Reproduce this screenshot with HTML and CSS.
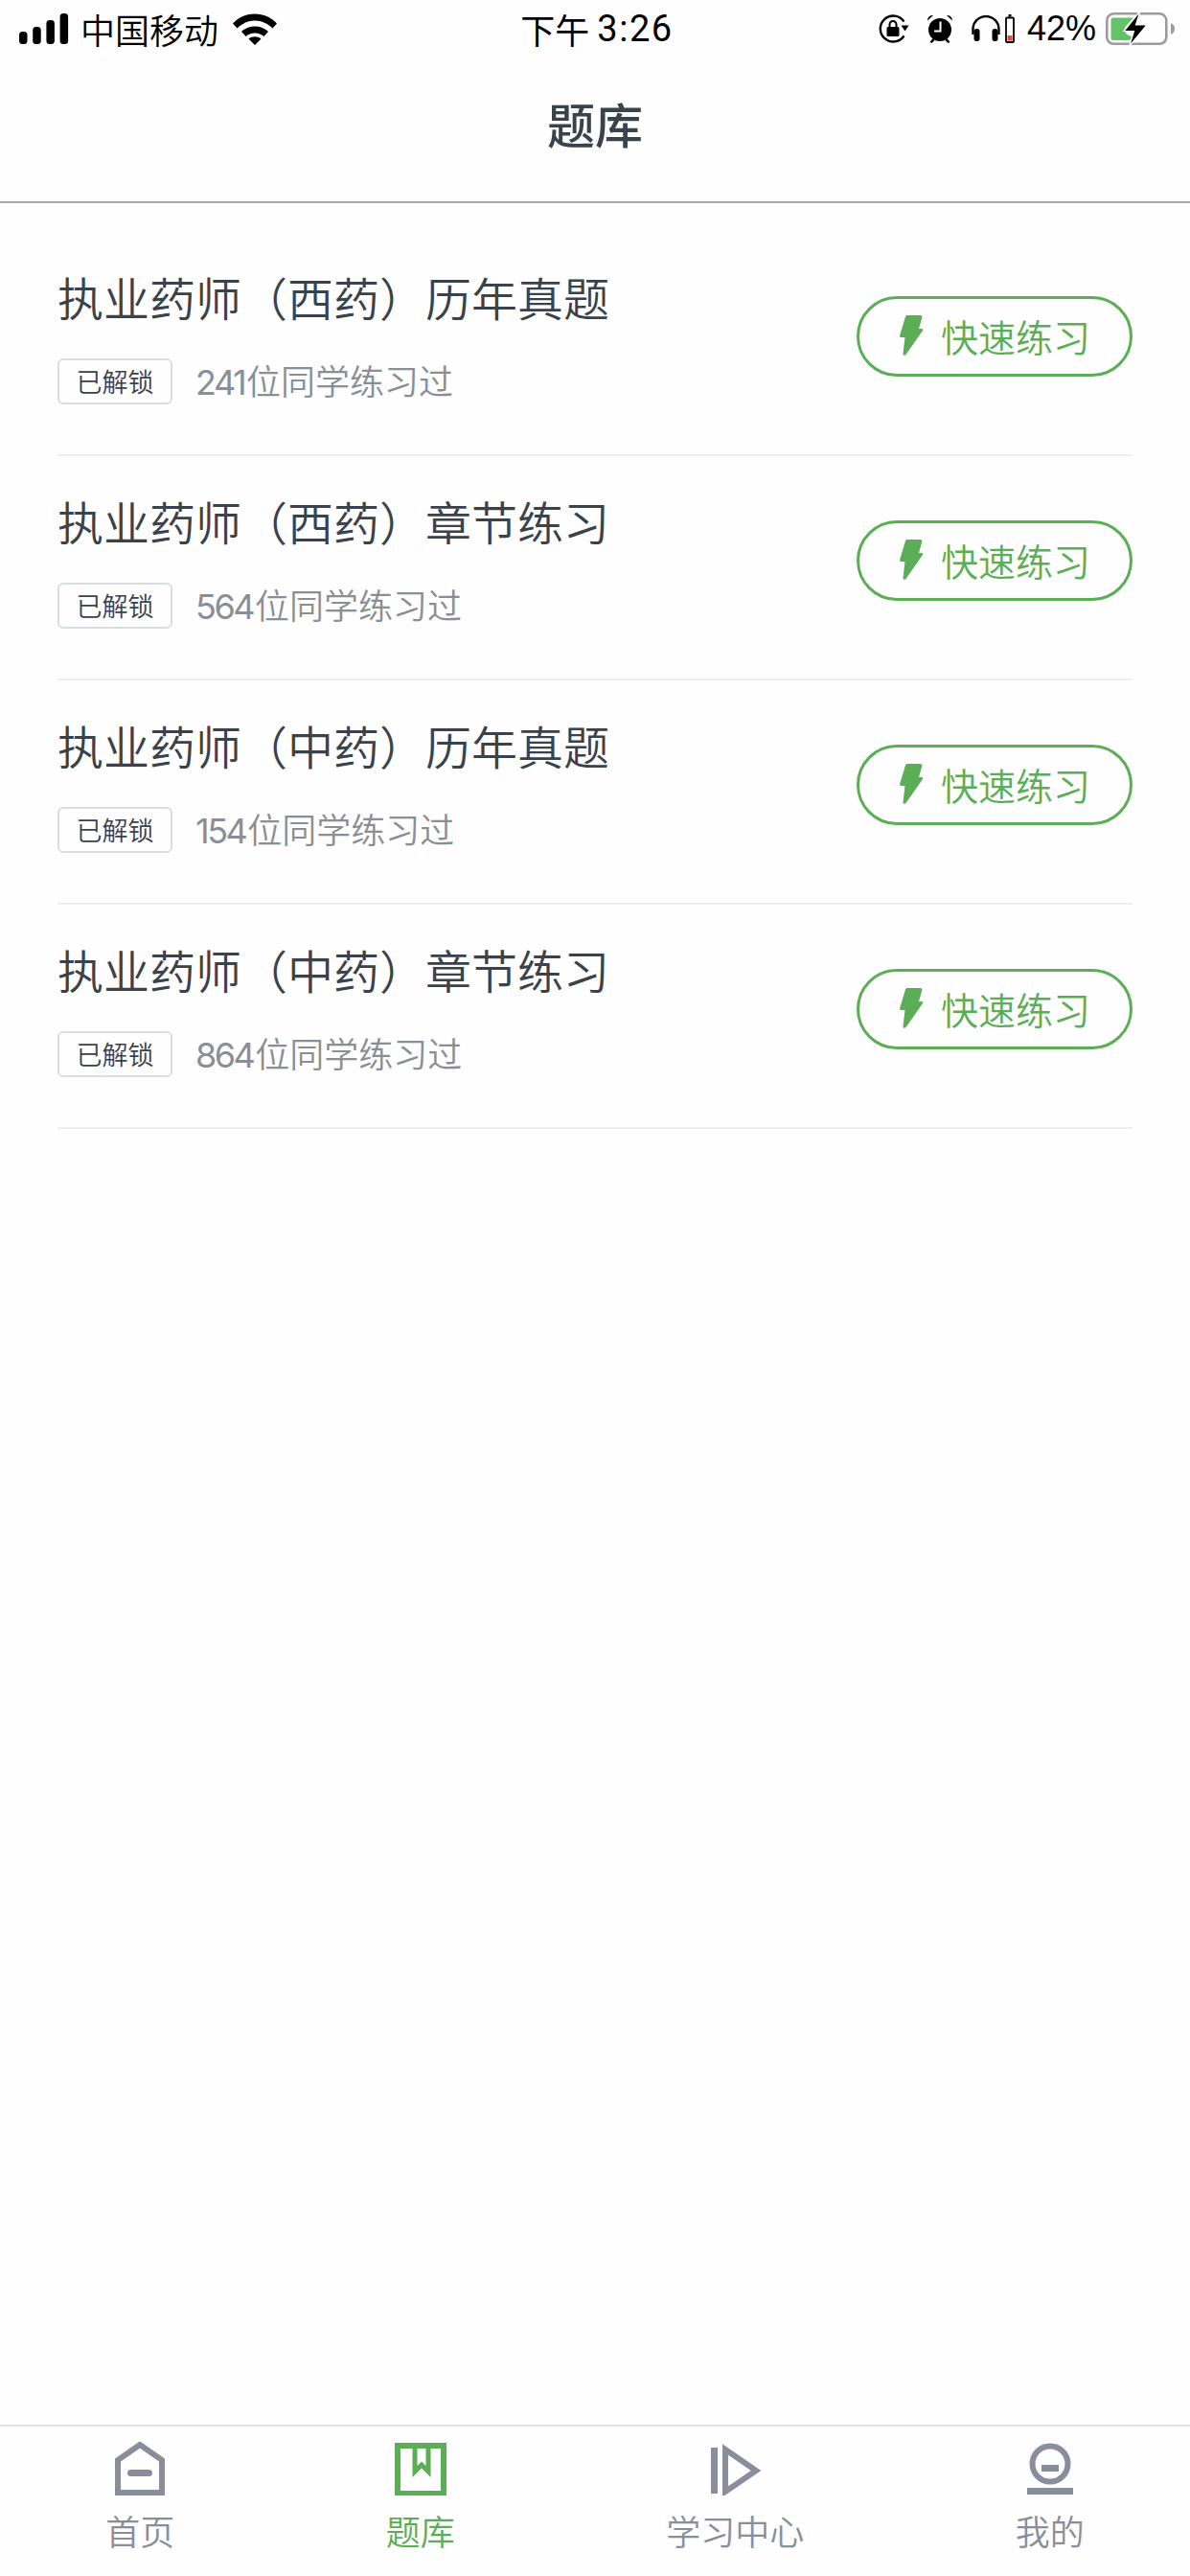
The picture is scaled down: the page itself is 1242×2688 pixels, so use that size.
FILE: index.html
```html
<!DOCTYPE html>
<html lang="zh-CN">
<head>
<meta charset="utf-8">
<title>题库</title>
<link rel="stylesheet" href="styles.css">
</head>
<body>
<div class="app">
  <header class="status">
    <div class="status-left">
      <svg class="sig" width="52" height="32" viewBox="0 0 52 32"><rect x="0" y="19" width="8.500" height="13" rx="3.500"/><rect x="14.200" y="14" width="8.500" height="18" rx="3.500"/><rect x="28.400" y="7" width="8.500" height="25" rx="3.500"/><rect x="42.600" y="0" width="8.500" height="32" rx="3.500"/></svg>
      <span class="carrier">中国移动</span>
      <svg class="wifi" width="46" height="33" viewBox="0 0 46 33"><path d="M0 10.500C6 4 14 .5 23 .5S40 4 46 10.500l-4.500 5C36.500 10.500 30 7.500 23 7.500S9.500 10.500 4.500 15.500zM9 19C12.500 15.500 17.500 13.500 23 13.500S33.500 15.500 37 19l-4.700 5C30 21.800 26.700 20.500 23 20.500S16 21.800 13.700 24zM16.500 26.500C18.300 25 20.500 24.300 23 24.300S27.700 25 29.500 26.500L23 33z"/></svg>
    </div>
    <div class="clock"><span class="clock-cn">下午</span><span class="clock-num">3:26</span></div>
    <div class="status-right">
      <svg class="ic-rot" width="32" height="30" viewBox="0 0 32 30"><path d="M26.500 7.500A13.500 13.500 0 1 0 26.500 22.500" fill="none" stroke="#000" stroke-width="2.400"/><path d="M23.500 11.500h8l-4 6z"/><rect x="8.500" y="13" width="13" height="10" rx="1.500"/><path d="M11.500 13v-2.500a3.500 3.500 0 0 1 7 0V13" fill="none" stroke="#000" stroke-width="2"/></svg>
      <svg class="ic-alarm" width="28" height="30" viewBox="0 0 28 30"><circle cx="14" cy="16" r="12"/><path d="M1 6.500C1 3 3.500 1 7 1zM27 6.500C27 3 24.500 1 21 1zM3.500 29l3-4 2 2-3 3zM24.500 29l-3-4-2 2 3 3z"/><path d="M14.500 7.500v10H8" fill="none" stroke="#fff" stroke-width="2"/></svg>
      <svg class="ic-head" width="30" height="28" viewBox="0 0 30 28"><path d="M1.500 20V14.500a13.500 13.500 0 0 1 27 0V20" fill="none" stroke="#000" stroke-width="2.400"/><rect x="2.500" y="14" width="6" height="13" rx="2.800"/><rect x="21.500" y="14" width="6" height="13" rx="2.800"/></svg>
      <svg class="ic-cell" width="10" height="30" viewBox="0 0 10 30"><rect x="1" y="3.500" width="8" height="25.500" rx="1" fill="none" stroke="#000" stroke-width="1.800"/><rect x="3.500" y="0" width="3" height="2.500"/><rect x="2.500" y="22" width="5" height="5.500" fill="#e8483c"/></svg>
      <span class="batt-pct">42%</span>
      <svg class="batt" width="72" height="38" viewBox="0 0 72 38"><rect x="1.300" y="3.300" width="62" height="31.500" rx="7" fill="none" stroke="#9c9c9c" stroke-width="2.600"/><path d="M5.500 10a2.500 2.500 0 0 1 2.500-2.500h21l-9 10c-1 5 2 9 8 9.500l-3 4H8a2.500 2.500 0 0 1-2.500-2.500z" fill="#62c466"/><path d="M68 13c3 1.500 4 3.500 4 6s-1 4.500-4 6z" fill="#9c9c9c"/><path d="M36 .5 19 21.500h10.500L24.500 37.500 43 15H31.500z" fill="#000" stroke="#fff" stroke-width="1.200"/></svg>
    </div>
  </header>

  <div class="navbar"><h1 class="nav-title">题库</h1></div>

  <main class="list">
    <section class="row">
      <div class="row-main">
        <h2 class="row-title">执业药师（西药）历年真题</h2>
        <div class="meta"><span class="tag">已解锁</span><span class="count"><span class="num">241</span>位同学练习过</span></div>
      </div>
      <a class="practice"><svg class="bolt" width="24" height="42" viewBox="0 0 24 42"><path d="M6 1.500C6.200.600 6.900 0 7.800 0h13.700c1.300 0 2.200 1.200 1.800 2.400L20 14h3c1 0 1.600 1 1.100 1.900L6.500 41c-.9 1.500-3.200.800-3-1L5.500 23H1.600C.600 23-.100 22.100.100 21.100z"/></svg>快速练习</a>
    </section>
    <section class="row">
      <div class="row-main">
        <h2 class="row-title">执业药师（西药）章节练习</h2>
        <div class="meta"><span class="tag">已解锁</span><span class="count"><span class="num">564</span>位同学练习过</span></div>
      </div>
      <a class="practice"><svg class="bolt" width="24" height="42" viewBox="0 0 24 42"><path d="M6 1.500C6.200.600 6.900 0 7.800 0h13.700c1.300 0 2.200 1.200 1.800 2.400L20 14h3c1 0 1.600 1 1.100 1.900L6.500 41c-.9 1.500-3.200.800-3-1L5.500 23H1.600C.600 23-.100 22.100.100 21.100z"/></svg>快速练习</a>
    </section>
    <section class="row">
      <div class="row-main">
        <h2 class="row-title">执业药师（中药）历年真题</h2>
        <div class="meta"><span class="tag">已解锁</span><span class="count"><span class="num">154</span>位同学练习过</span></div>
      </div>
      <a class="practice"><svg class="bolt" width="24" height="42" viewBox="0 0 24 42"><path d="M6 1.500C6.200.600 6.900 0 7.800 0h13.700c1.300 0 2.200 1.200 1.800 2.400L20 14h3c1 0 1.600 1 1.100 1.900L6.500 41c-.9 1.500-3.200.800-3-1L5.500 23H1.600C.600 23-.100 22.100.100 21.100z"/></svg>快速练习</a>
    </section>
    <section class="row">
      <div class="row-main">
        <h2 class="row-title">执业药师（中药）章节练习</h2>
        <div class="meta"><span class="tag">已解锁</span><span class="count"><span class="num">864</span>位同学练习过</span></div>
      </div>
      <a class="practice"><svg class="bolt" width="24" height="42" viewBox="0 0 24 42"><path d="M6 1.500C6.200.600 6.900 0 7.800 0h13.700c1.300 0 2.200 1.200 1.800 2.400L20 14h3c1 0 1.600 1 1.100 1.900L6.500 41c-.9 1.500-3.200.800-3-1L5.500 23H1.600C.600 23-.100 22.100.100 21.100z"/></svg>快速练习</a>
    </section>
  </main>

  <nav class="tabbar">
    <div class="tab">
      <svg class="tab-icon" width="54" height="56" viewBox="0 0 54 56"><path d="M4 53V19L27 3l23 16v34z" fill="none" stroke="#8a8e9b" stroke-width="6"/><rect x="14" y="29" width="26" height="7" rx="3.500" fill="#8a8e9b"/></svg>
      <span class="tab-label">首页</span>
    </div>
    <div class="tab tab-on">
      <svg class="tab-icon" width="54" height="56" viewBox="0 0 54 56"><path d="M3 4h48v50H3z" fill="none" stroke="#5bae56" stroke-width="6"/><path d="M21 4h14v27l-7-7-7 7z" fill="none" stroke="#5bae56" stroke-width="5"/></svg>
      <span class="tab-label">题库</span>
    </div>
    <div class="tab">
      <svg class="tab-icon" width="54" height="56" viewBox="0 0 54 56"><rect x="2" y="6" width="7" height="48" fill="#8a8e9b"/><path d="M17 8 49 30 17 52z" fill="none" stroke="#8a8e9b" stroke-width="6"/></svg>
      <span class="tab-label">学习中心</span>
    </div>
    <div class="tab">
      <svg class="tab-icon" width="54" height="56" viewBox="0 0 54 56"><circle cx="27" cy="23" r="18.500" fill="none" stroke="#8a8e9b" stroke-width="6"/><rect x="18" y="24" width="18" height="7" fill="#8a8e9b"/><rect x="3" y="48" width="48" height="7" fill="#8a8e9b"/></svg>
      <span class="tab-label">我的</span>
    </div>
  </nav>
</div>
</body>
</html>
```

FILE: styles.css
```css
* { box-sizing: border-box; }
html, body { margin: 0; padding: 0; }
body {
  width: 1242px;
  height: 2688px;
  background: #fefefe;
  font-family: "Noto Sans CJK SC", "Noto Sans", sans-serif;
  color: #3a424c;
  overflow: hidden;
}
.app {
  width: 1242px;
  height: 2688px;
  display: flex;
  flex-direction: column;
}

/* status bar */
.status {
  height: 60px;
  padding: 0 16px 0 20px;
  display: grid;
  grid-template-columns: 1fr auto 1fr;
  align-items: center;
  color: #000;
}
.status-left, .status-right { display: flex; align-items: center; }
.status-right { justify-content: flex-end; }
.sig { margin-right: 12px; }
.carrier { font-size: 36px; line-height: 44px; font-weight: 350; }
.wifi { margin-left: 15px; }
.clock { display: flex; align-items: center; gap: 8px; line-height: 44px; }
.clock-cn { font-size: 36px; }
.clock-num { font-family: "Roboto", sans-serif; font-size: 38px; font-weight: 400; letter-spacing: 1.500px; }
.ic-alarm { margin-left: 18px; }
.ic-head { margin-left: 19px; }
.ic-cell { margin-left: 5px; }
.batt-pct { margin-left: 13px; font-size: 36px; line-height: 44px; font-family: "Liberation Sans", sans-serif; }
.batt { margin-left: 10px; }

/* nav */
.navbar {
  height: 152px;
  border-bottom: 2px solid #a8a8a8;
  display: flex;
  justify-content: center;
  padding-top: 38px;
}
.nav-title { margin: 0; font-size: 50px; line-height: 60px; font-weight: 500; height: 60px; }

/* list */
.list { flex: 1; padding: 30px 60px 0; }
.row {
  height: 234px;
  border-bottom: 2px solid #eeeeee;
  display: flex;
  justify-content: space-between;
  padding-top: 37px;
}
.row-main { display: flex; flex-direction: column; }
.row-title { margin: 0; font-size: 48px; line-height: 60px; font-weight: 350; }
.meta { margin-top: 33px; display: flex; align-items: center; }
.tag {
  width: 120px;
  height: 48px;
  border: 2px solid #d8dde0;
  border-radius: 6px;
  font-size: 27px;
  line-height: 44px;
  text-align: center;
  font-weight: 350;
}
.count { margin-left: 24px; font-size: 36px; line-height: 48px; color: #8a8e95; font-weight: 350; }
.num { font-family: "Inter", "Roboto", sans-serif; font-weight: 400; letter-spacing: -2.500px; margin-right: 2px; }

.practice {
  margin-top: 30px;
  width: 288px;
  height: 84px;
  border: 3px solid #5bae56;
  border-radius: 42px;
  display: flex;
  align-items: center;
  padding: 0 0 3px 42px;
  gap: 19px;
  font-size: 39px;
  line-height: 50px;
  font-weight: 350;
  color: #5bae56;
}
.bolt { fill: #5bae56; flex: none; }

/* tab bar */
.tabbar {
  height: 158px;
  border-top: 2px solid #e2e2e2;
  display: flex;
  justify-content: space-around;
  padding-top: 16px;
}
.tab { display: flex; flex-direction: column; align-items: center; }
.tab-label { margin-top: 14px; font-size: 36px; line-height: 44px; color: #8a8e9b; font-weight: 350; }
.tab-on .tab-label { color: #5bae56; }
```
